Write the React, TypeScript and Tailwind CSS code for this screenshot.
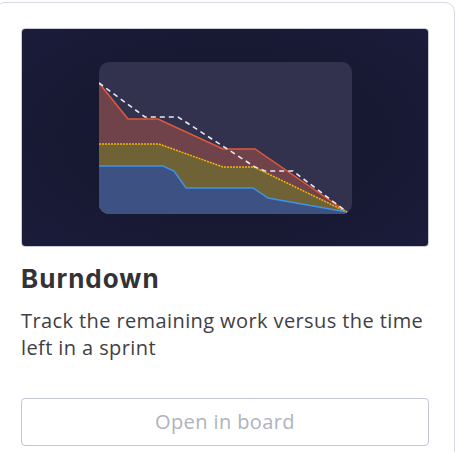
const red = "0,21 29,57 59,57 124,87 156,87 248,150";
const yellow = "0,82 60,82 124,105 155,105 248,150";
const blue = "0,104 64,104 75,109 87,126 154,126 169,136 248,150";
const ideal = "0,21 46,55 79,55 156,105 166,109 194,109 248,150";

function BurndownChart() {
  return (
    <svg width="253" height="152" viewBox="0 0 253 152" className="block">
      {/* stacked areas */}
      <polygon points={`${red} 248,152 0,152`} fill="#6f4349" />
      <polygon points={`${yellow} 248,152 0,152`} fill="#6f6236" />
      <polygon points={`${blue} 248,152 0,152`} fill="#3d5282" />
      <polyline points={red} fill="none" stroke="#e2583a" strokeWidth="1.5" />
      <polyline points={yellow} fill="none" stroke="#f2b705" strokeWidth="1.5" strokeDasharray="2 1" />
      <polyline points={blue} fill="none" stroke="#3f93e6" strokeWidth="1.5" />
      <polyline points={ideal} fill="none" stroke="#e8e8f0" strokeWidth="1.6" strokeDasharray="5 4" />
    </svg>
  );
}

export default function App() {
  return (
    <div className="w-[467px] h-[452px] overflow-hidden bg-white" style={{ fontFamily: "'Open Sans', sans-serif" }}>
      <div className="mt-[2px] -ml-[5px] w-[460px] h-[480px] border border-[#d5d8e6] rounded-[10px] px-[25px] pt-[25px] bg-white">

        {/* Preview image */}
        <div className="h-[219px] rounded-[4px] border border-[#c9cbd8] bg-[radial-gradient(ellipse_at_center,#12132a_0%,#181933_60%,#1b1c3a_100%)] flex items-center justify-center">
          <div className="w-[253px] h-[152px] rounded-[10px] overflow-hidden bg-[#32324f]">
            <BurndownChart />
          </div>
        </div>

        <h2 className="mt-[16px] text-[26px] font-bold text-[#323338] leading-[32px] tracking-[1px]" style={{ fontFamily: "Inter, sans-serif" }}>
          Burndown
        </h2>
        <p className="mt-[12px] text-[20px] text-[#3f4045] leading-[27px] tracking-[0.4px]">
          Track the remaining work versus the time left in a sprint
        </p>

        <button className="mt-[37px] w-full h-[48px] rounded-[4px] border border-[#c3c6d4] text-[20px] tracking-[0.4px] text-[#b0b2bd] bg-white">
          Open in board
        </button>
      </div>
    </div>
  );
}
